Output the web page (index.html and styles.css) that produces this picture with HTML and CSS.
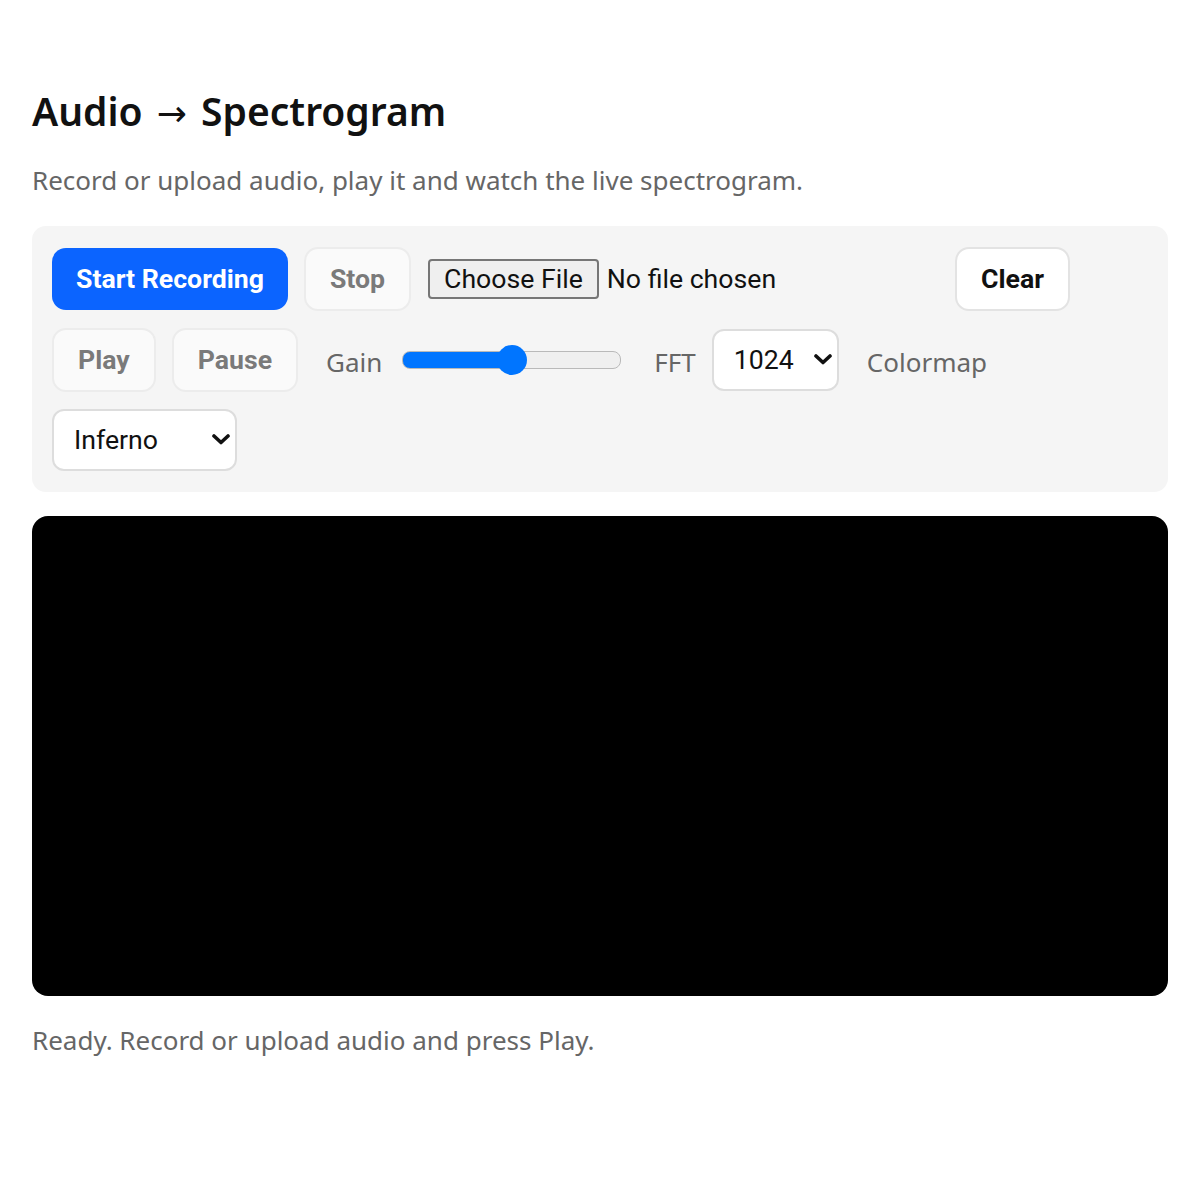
FILE: index.html
```html
<!DOCTYPE html>
<html lang="en">
    <head>
        <title>Audio → Spectrogram</title>
        <meta charset="utf-8">
        <meta name="viewport" content="width=device-width, initial-scale=1.0">
        <link rel="stylesheet" href="styles.css">
    </head>
    <body>
      <div id="app">
          <h1>Audio <span class="arrow">→</span> Spectrogram</h1>
          <p class="lead">Record or upload audio, play it and watch the live spectrogram.</p>

          <div class="controls">
              <button class="btn primary">Start Recording</button>
              <button class="btn" disabled>Stop</button>
              <input type="file" class="file" accept="audio/*">
              <button class="btn">Clear</button>

              <button class="btn" disabled>Play</button>
              <button class="btn" disabled>Pause</button>

              <label class="field gain">Gain
                <input type="range" class="slider" min="0" max="2" step="0.01" value="1">
              </label>

              <label class="field fft">FFT
                <span class="select-wrap">
                  <select class="select select-fft">
                      <option>512</option>
                      <option selected>1024</option>
                      <option>2048</option>
                  </select>
                  <svg class="chev" width="18" height="11" viewBox="0 0 18 11"><path d="M2 2 L9 8.5 L16 2" fill="none" stroke="#111" stroke-width="3.6" stroke-linecap="round" stroke-linejoin="round"/></svg>
                </span>
              </label>

              <span class="field cmap">Colormap</span>
              <span class="select-wrap">
                <select class="select select-cmap">
                    <option selected>Inferno</option>
                    <option>Magma</option>
                    <option>Viridis</option>
                    <option>Gray</option>
                </select>
                <svg class="chev" width="18" height="11" viewBox="0 0 18 11"><path d="M2 2 L9 8.5 L16 2" fill="none" stroke="#111" stroke-width="3.6" stroke-linecap="round" stroke-linejoin="round"/></svg>
              </span>
          </div>

          <canvas class="spectrogram" width="1136" height="480"></canvas>

          <p class="status">Ready. Record or upload audio and press Play.</p>
      </div>
    </body>
</html>
```

FILE: styles.css
```css
body {
    margin: 0px;
    background-color: #ffffff;
    color: #111111;
    font-family: "Noto Sans", "Open Sans", sans-serif;
}

#app {
  padding: 0 32px;
}

h1 {
  margin: 81px 0 0 0;
  font-size: 39px;
  font-weight: 600;
  line-height: 60px;
}
h1 .arrow {
  margin: 0 4px;
  font-family: "DejaVu Sans", sans-serif;
  font-weight: 400;
  font-size: 36px;
  line-height: 0;
}

.lead {
  margin: 21px 0 0 0;
  font-size: 26px;
  color: #666666;
}

/* control panel */
.controls {
  margin-top: 28px;
  padding: 21px 20px 21px 20px;
  background: #f5f5f5;
  border-radius: 14px;
  display: flex;
  flex-wrap: wrap;
  align-items: center;
  gap: 17px 16px;
}

.btn {
  height: 64px;
  padding: 0 24px;
  font-family: Roboto, "Liberation Sans", sans-serif;
  font-size: 26.67px;
  font-weight: 700;
  color: #111111;
  background: #ffffff;
  border: 2px solid #e3e3e3;
  border-radius: 14px;
  cursor: pointer;
}
.btn:disabled {
  background: #fafafa;
  border-color: #ececec;
  color: #7a7a7a;
  cursor: default;
}
.btn.primary {
  height: 62px;
  background: #0b64ff;
  border: none;
  color: #ffffff;
}

.file {
  width: 511px;
  margin-left: 1px;
  font-family: Roboto, "Liberation Sans", sans-serif;
  font-size: 26.67px;
  color: #111111;
}
.file::file-selector-button {
  font-family: Roboto, "Liberation Sans", sans-serif;
  font-size: 26.67px;
  color: #111111;
  padding: 2px 14px;
  margin-right: 8px;
  background: #efefef;
  border: 2px solid #767676;
  border-radius: 4px;
}

.field {
  display: flex;
  align-items: center;
  gap: 18px;
  margin-left: 12px;
  padding-top: 4px;
  font-size: 26px;
  color: #666666;
}
.field .select-wrap { margin-top: -4px; }
.fft { gap: 16px; margin-left: 15px; }
.cmap { margin-left: 12px; }

/* gain slider */
.slider {
  -webkit-appearance: none;
  appearance: none;
  width: 217px;
  height: 16px;
  margin: -4px 2px 0 2px;
  border: 1px solid #b9b9b9;
  border-radius: 8px;
  background: linear-gradient(to right, #0075ff 50%, #efefef 50%);
}
.slider::-webkit-slider-thumb {
  -webkit-appearance: none;
  width: 30px;
  height: 30px;
  border-radius: 50%;
  background: #0075ff;
  border: none;
}

.select-wrap {
  position: relative;
  display: inline-block;
}
.select {
  -webkit-appearance: none;
  appearance: none;
  height: 62px;
  padding: 0 0 0 20px;
  font-family: Roboto, "Liberation Sans", sans-serif;
  font-size: 26.67px;
  color: #111111;
  background: #ffffff;
  border: 2px solid #dddddd;
  border-radius: 12px;
}
.select-fft { width: 127px; }
.select-cmap { width: 185px; }
.chev {
  position: absolute;
  right: 7px;
  top: 25px;
  pointer-events: none;
}

.spectrogram {
  display: block;
  width: 100%;
  height: 480px;
  margin-top: 24px;
  background: #000000;
  border-radius: 16px;
}

.status {
  margin: 26px 0 0 0;
  font-size: 26px;
  color: #666666;
}
```
